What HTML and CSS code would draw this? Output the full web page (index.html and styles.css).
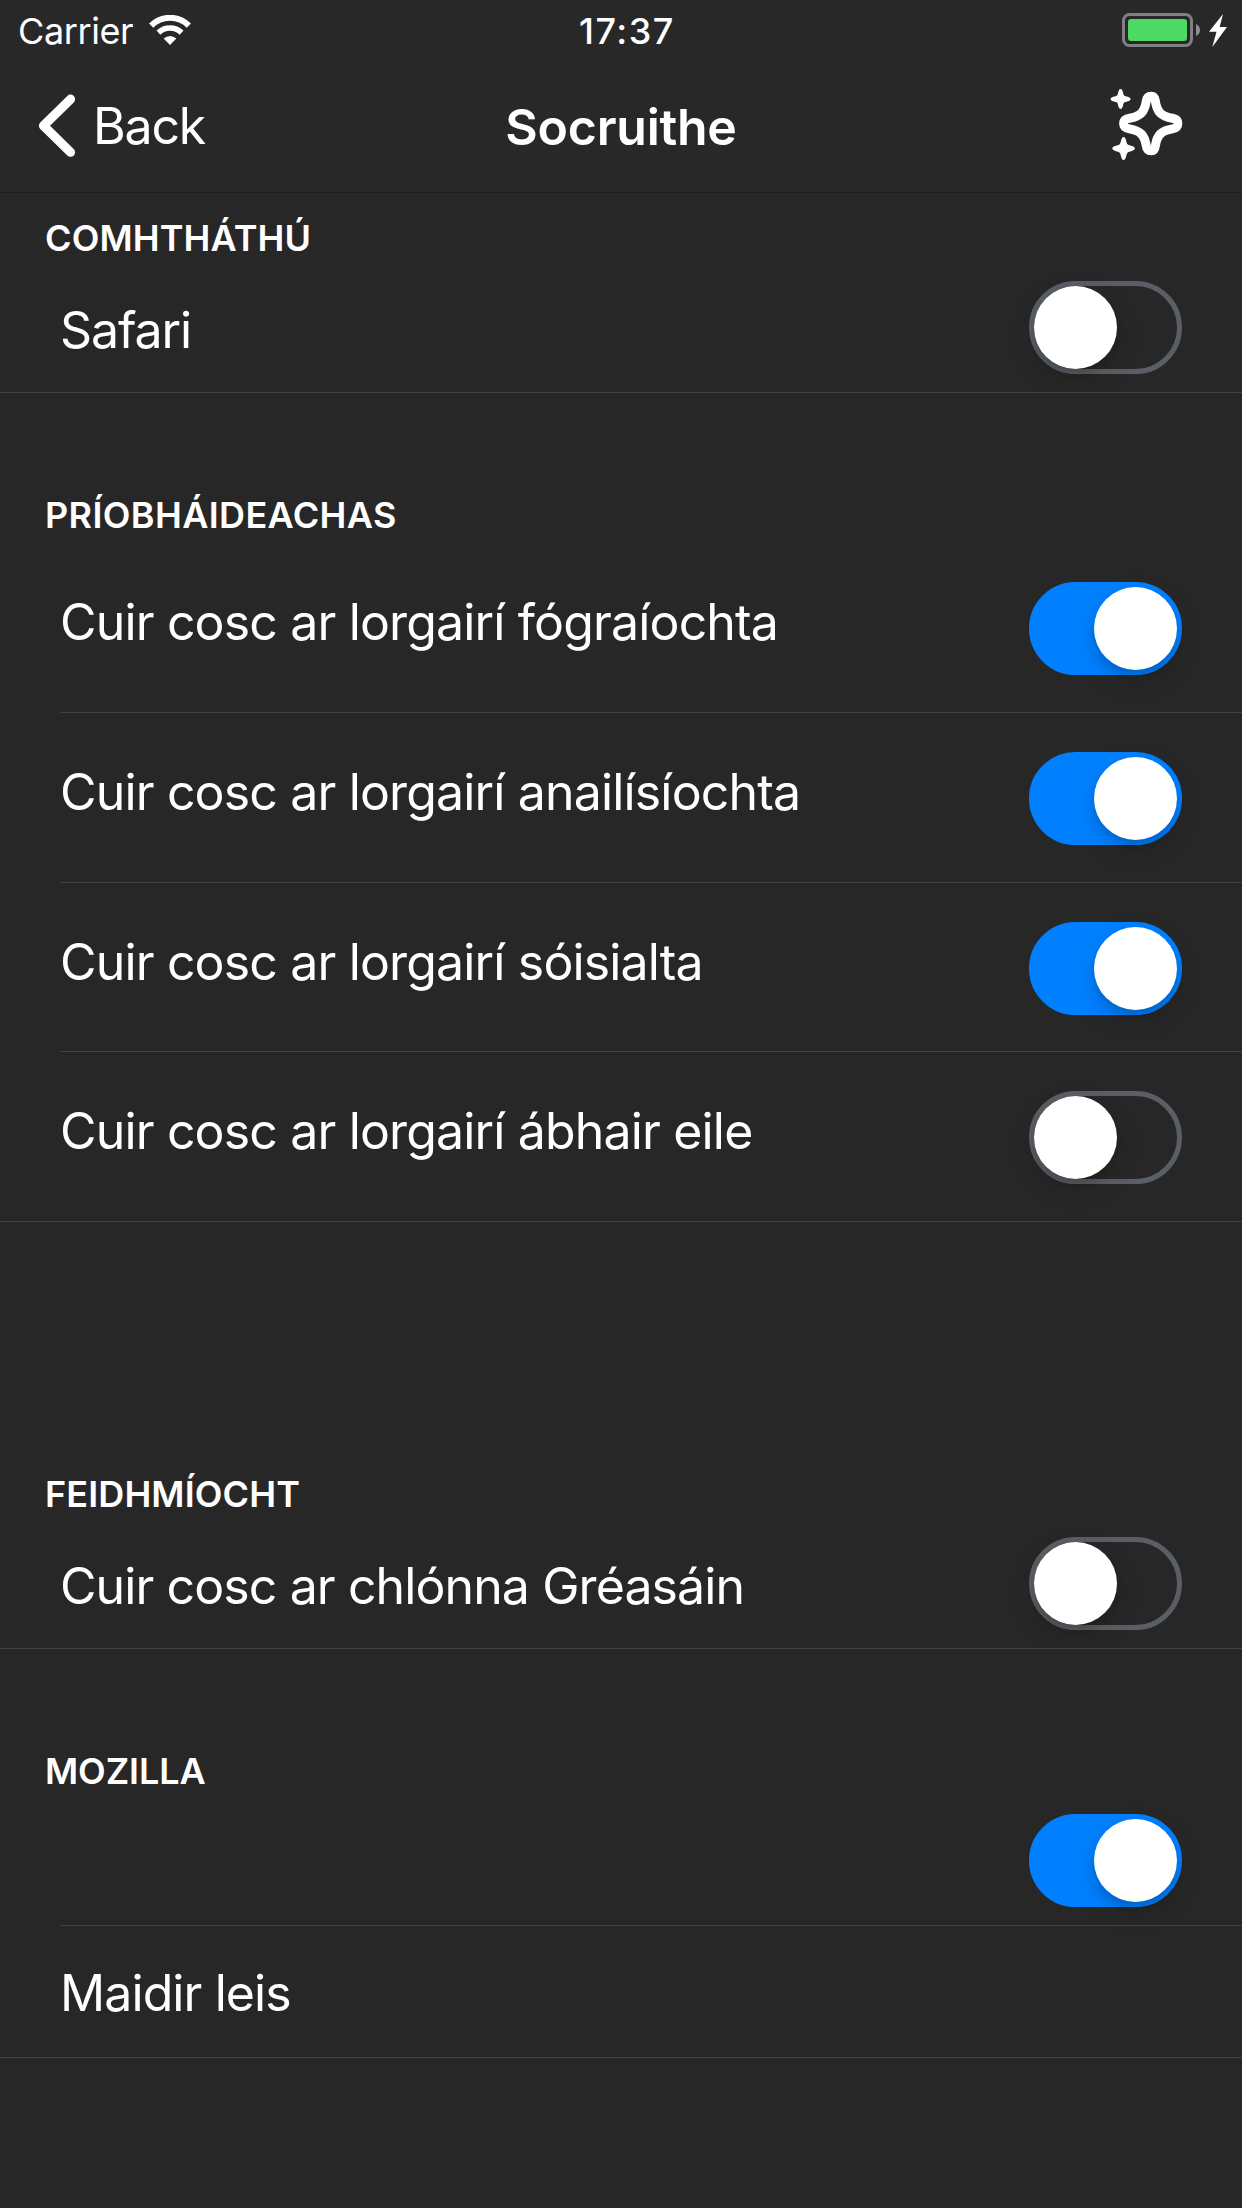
FILE: index.html
```
<!DOCTYPE html>
<html lang="ga">
<head>
<meta charset="utf-8">
<title>Socruithe</title>
<link rel="stylesheet" href="styles.css">
</head>
<body>
<header>
  <div class="status">
    <div class="carrier"><span>Carrier</span>
      <svg class="wifi" width="42" height="30" viewBox="0 0 42 30"><g fill="none" stroke="#fff"><path d="M2.2 10.6A26.5 26.5 0 0 1 39.8 10.6" stroke-width="6"/><path d="M9.4 17.6A17 17 0 0 1 32.6 17.6" stroke-width="5.6"/></g><path d="M21 30L14.6 23.6Q21 18.400 27.400 23.600Z" fill="#fff"/></svg>
    </div>
    <time>17:37</time>
    <div class="power">
      <svg width="106" height="34" viewBox="0 0 106 34"><rect x="1.500" y="1.500" width="68" height="31" rx="6" fill="none" stroke="#808080" stroke-width="3"/><rect x="6" y="6" width="59" height="22" rx="3" fill="#4cd964"/><path d="M74 11Q78 13 78 17Q78 21 74 23Z" fill="#8e8e8e"/><path d="M101 1L87 18.700H94.500L90.300 34L105 14H97.700Z" fill="#fff"/></svg>
    </div>
  </div>
  <nav class="navbar">
    <a class="back"><svg width="38" height="64" viewBox="0 0 38 64"><path d="M32.500 5.200L5.500 31.700L32.500 58.200" fill="none" stroke="#fff" stroke-width="9.200" stroke-linecap="round" stroke-linejoin="round"/></svg><span>Back</span></a>
    <h1>Socruithe</h1>
    <svg class="sparkle" width="74" height="74" viewBox="0 0 74 74"><path d="M41.300 7.200C37.800 7.200 36.600 9.500 36.200 12.500C34.500 23 30.500 27.500 19.500 29.300C15.500 30 13.600 31.200 13.600 34.600C13.600 38 15.500 39.200 19.500 39.900C30.500 41.700 34.500 46.200 36.200 56.500C36.600 59.700 37.800 61.800 41.300 61.800C44.800 61.800 45 59.700 45.400 56.500C47.100 46.200 51.100 41.700 62.500 39.900C66.500 39.200 67.800 38 67.800 34.600C67.800 31.200 66.500 30 62.500 29.300C51.100 27.500 47.100 23 45.400 12.500C45 9.500 44.800 7.200 41.300 7.200Z" fill="none" stroke="#fff" stroke-width="9"/><path d="M10.600 0C13 0 13 5 14 6.400C15.500 7.500 20.600 7.500 20.600 10C20.600 12.500 15.500 12.500 14 13.600C13 15 13 20 10.600 20C8.200 20 8.200 15 7.200 13.600C5.700 12.500.6 12.500.6 10C.6 7.500 5.700 7.500 7.200 6.400C8.200 5 8.200 0 10.600 0Z" fill="#fff"/><path d="M13.600 48C16.300 48 16 53.800 17.500 55.300C19 56.800 24.800 56.800 24.800 59.500C24.800 62.200 19 62.200 17.500 63.700C16 65.200 16.300 71 13.600 71C10.900 71 11.200 65.200 9.700 63.700C8.200 62.200 2.400 62.200 2.400 59.500C2.400 56.800 8.200 56.800 9.700 55.300C11.200 53.800 10.900 48 13.600 48Z" fill="#fff"/></svg>
  </nav>
</header>
<main>
  <section class="integration">
    <h2>COMHTHÁTHÚ</h2>
    <div class="row"><span class="label safari">Safari</span><i class="switch"></i></div>
  </section>
  <section class="privacy">
    <h2 class="wide">PRÍOBHÁIDEACHAS</h2>
    <div class="row tall inset"><span class="label">Cuir cosc ar lorgairí fógraíochta</span><i class="switch on"></i></div>
    <div class="row tall inset"><span class="label">Cuir cosc ar lorgairí anailísíochta</span><i class="switch on"></i></div>
    <div class="row tall inset short"><span class="label">Cuir cosc ar lorgairí sóisialta</span><i class="switch on"></i></div>
    <div class="row tall"><span class="label">Cuir cosc ar lorgairí ábhair eile</span><i class="switch"></i></div>
  </section>
  <section class="performance">
    <h2>FEIDHMÍOCHT</h2>
    <div class="row"><span class="label fonts">Cuir cosc ar chlónna Gréasáin</span><i class="switch"></i></div>
  </section>
  <section class="mozilla">
    <h2 class="tight">MOZILLA</h2>
    <div class="row inset"><span class="label"></span><i class="switch on"></i></div>
    <div class="row about"><span class="label fonts">Maidir leis</span></div>
  </section>
</main>
</body>
</html>
```
FILE: styles.css
```
* { box-sizing: border-box; }
body {
  margin: 0;
  min-height: 2208px;
  background: #272727;
  color: #fff;
  font-family: Inter, "Liberation Sans", sans-serif;
}
h1, h2 { margin: 0; font-weight: 600; }
svg { display: block; flex: none; }

header { height: 193px; background: #282828; border-bottom: 1px solid #1c1c1c; }
.status {
  display: grid;
  grid-template-columns: 1fr auto 1fr;
  height: 60px;
  padding: 9px 14px 0 18px;
  font-size: 36px;
  line-height: 44px;
}
.carrier { display: flex; letter-spacing: -0.4px; }
.wifi { margin: 6px 0 0 16px; }
.status time { padding-left: 8px; font-weight: 500; letter-spacing: 1.5px; }
.power { display: flex; justify-content: flex-end; padding-top: 4px; }

.navbar {
  display: grid;
  grid-template-columns: 1fr auto 1fr;
  height: 132px;
  padding: 35px 38px 0;
  font-size: 50px;
  line-height: 60px;
}
.back { display: flex; gap: 17px; letter-spacing: -1.2px; }
.back svg { margin-top: -1px; }
.back span { padding-top: 1px; }
.navbar h1 { padding: 2px 0 0; font-size: 50px; letter-spacing: -0.25px; }
.sparkle { justify-self: end; margin: -6px 20px 0 0; }

h2 { padding-left: 45px; font-size: 36px; line-height: 44px; letter-spacing: 0.12px; }
h2.wide { letter-spacing: 0.37px; }
h2.tight { letter-spacing: -0.1px; }

.integration { padding-top: 23px; }
.privacy, .mozilla { padding-top: 100px; }
.performance { padding-top: 250px; }
.privacy h2 { margin-bottom: 6px; }

.row {
  display: flex;
  justify-content: space-between;
  align-items: flex-start;
  height: 133px;
  padding: 21px 60px 0;
  border-bottom: 1px solid #414143;
}
.row.inset { margin-left: 60px; padding-left: 0; }
.row.tall { height: 170px; padding-top: 39px; }
.row.tall.short { height: 169px; }
.row.about { height: 132px; padding-top: 18px; }
.label {
  margin-top: 19px;
  font-size: 50px;
  line-height: 60px;
  letter-spacing: -0.84px;
  white-space: nowrap;
}
.tall .label { margin-top: 10px; }
.label.safari { letter-spacing: -1.1px; }
.label.fonts { letter-spacing: -0.9px; }

.switch {
  display: flex;
  width: 153px;
  height: 93px;
  border: 5px solid #5a5f65;
  border-radius: 47px;
}
.switch::before {
  content: "";
  width: 83px;
  height: 83px;
  border-radius: 50%;
  background: #fff;
  box-shadow: 0 9px 24px rgba(0, 0, 0, .15), 0 6px 6px rgba(0, 0, 0, .1);
}
.switch.on { justify-content: flex-end; background: #0080ff; border-color: #0080ff; }
```
